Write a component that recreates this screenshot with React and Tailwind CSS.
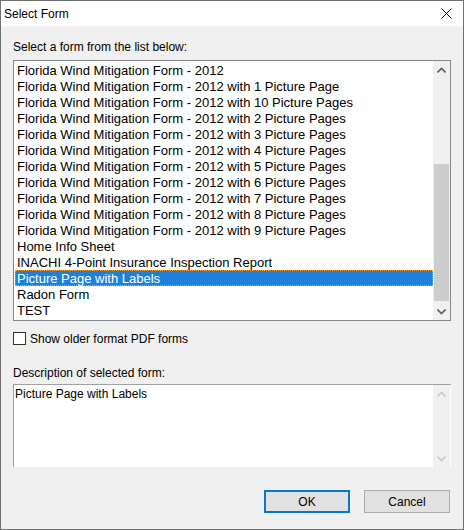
import React, { useState } from 'react'

const forms = [
  'Florida Wind Mitigation Form - 2012',
  'Florida Wind Mitigation Form - 2012 with 1 Picture Page',
  'Florida Wind Mitigation Form - 2012 with 10 Picture Pages',
  'Florida Wind Mitigation Form - 2012 with 2 Picture Pages',
  'Florida Wind Mitigation Form - 2012 with 3 Picture Pages',
  'Florida Wind Mitigation Form - 2012 with 4 Picture Pages',
  'Florida Wind Mitigation Form - 2012 with 5 Picture Pages',
  'Florida Wind Mitigation Form - 2012 with 6 Picture Pages',
  'Florida Wind Mitigation Form - 2012 with 7 Picture Pages',
  'Florida Wind Mitigation Form - 2012 with 8 Picture Pages',
  'Florida Wind Mitigation Form - 2012 with 9 Picture Pages',
  'Home Info Sheet',
  'INACHI 4-Point Insurance Inspection Report',
  'Picture Page with Labels',
  'Radon Form',
  'TEST',
]

const Chevron = ({ down, color }) => (
  <svg width="9" height="6" viewBox="0 0 9 6">
    <path
      d={down ? 'M0.5 0.5 L4.5 4.5 L8.5 0.5' : 'M0.5 5.5 L4.5 1.5 L8.5 5.5'}
      fill="none"
      stroke={color}
      strokeWidth="1.6"
    />
  </svg>
)

const App = () => {
  const [selected, setselected] = useState(13)
  const [older, setolder] = useState(false)

  return (
    <div className="w-[464px] h-[530px] bg-[#f0f0f0] border border-[#707070] flex flex-col text-[12px] text-black leading-none" style={{ fontFamily: '"Liberation Sans", Arial, sans-serif' }}>
      {/* title bar */}
      <div className="h-[25px] bg-white flex items-center justify-between shrink-0">
        <span className="pl-[3px] pt-[1px]">Select Form</span>
        <button className="w-[34px] h-[25px] flex items-center justify-center">
          <svg width="11" height="11" viewBox="0 0 11 11">
            <path d="M0.5 0.5 L10.5 10.5 M10.5 0.5 L0.5 10.5" stroke="#000" strokeWidth="1" />
          </svg>
        </button>
      </div>

      <div className="flex flex-col pl-[12px] pr-[12px]">
        <div className="mt-[15px] h-[14px]">Select a form from the list below:</div>

        {/* list */}
        <div className="mt-[5px] h-[261px] border border-[#828790] bg-white flex">
          <div className="flex-1 pt-[1px] pl-[1px] text-[13px]">
            {forms.map((f, i) => (
              <div
                key={f}
                onClick={() => setselected(i)}
                className={
                  i === selected
                    ? 'h-[16px] flex items-center pl-[1px] bg-[#1f80dc] text-white border border-dotted border-[#f5a030] cursor-default'
                    : 'h-[16px] flex items-center pl-[2px] cursor-default'
                }
              >
                {f}
              </div>
            ))}
          </div>
          <div className="w-[17px] bg-[#f0f0f0] flex flex-col items-center">
            <div className="h-[17px] flex items-center justify-center">
              <Chevron color="#606060" />
            </div>
            <div className="flex-1 w-full flex flex-col">
              <div className="h-[86px]" />
              <div className="h-[137px] mx-[1px] bg-[#cdcdcd]" />
            </div>
            <div className="h-[17px] flex items-center justify-center">
              <Chevron down color="#606060" />
            </div>
          </div>
        </div>

        {/* checkbox */}
        <label className="mt-[11px] flex items-center gap-[4px] h-[13px]">
          <span
            onClick={() => setolder(!older)}
            className="w-[13px] h-[13px] border border-[#333] bg-white flex items-center justify-center"
          >
            {older && (
              <svg width="9" height="8" viewBox="0 0 9 8">
                <path d="M0.5 4 L3.5 7 L8.5 0.5" fill="none" stroke="#000" strokeWidth="1.4" />
              </svg>
            )}
          </span>
          <span>Show older format PDF forms</span>
        </label>

        <div className="mt-[22px] h-[14px]">Description of selected form:</div>

        {/* description */}
        <div className="mt-[3px] h-[83px] bg-white border-t border-l border-[#a0a0a0] flex">
          <div className="flex-1 pl-[1px] pt-[3px]">{forms[selected]}</div>
          <div className="w-[17px] bg-[#f0f0f0] flex flex-col items-center justify-between mr-[1px]">
            <div className="h-[17px] flex items-center justify-center">
              <Chevron color="#c8c8c8" />
            </div>
            <div className="h-[17px] flex items-center justify-center">
              <Chevron down color="#c8c8c8" />
            </div>
          </div>
        </div>

        {/* buttons */}
        <div className="mt-[23px] flex justify-end gap-[14px] pr-[1px]">
          <button className="w-[86px] h-[23px] bg-[#e1e1e1] border-2 border-[#0078d7]">OK</button>
          <button className="w-[86px] h-[23px] bg-[#e1e1e1] border border-[#adadad]">Cancel</button>
        </div>
      </div>
    </div>
  )
}

export default App
